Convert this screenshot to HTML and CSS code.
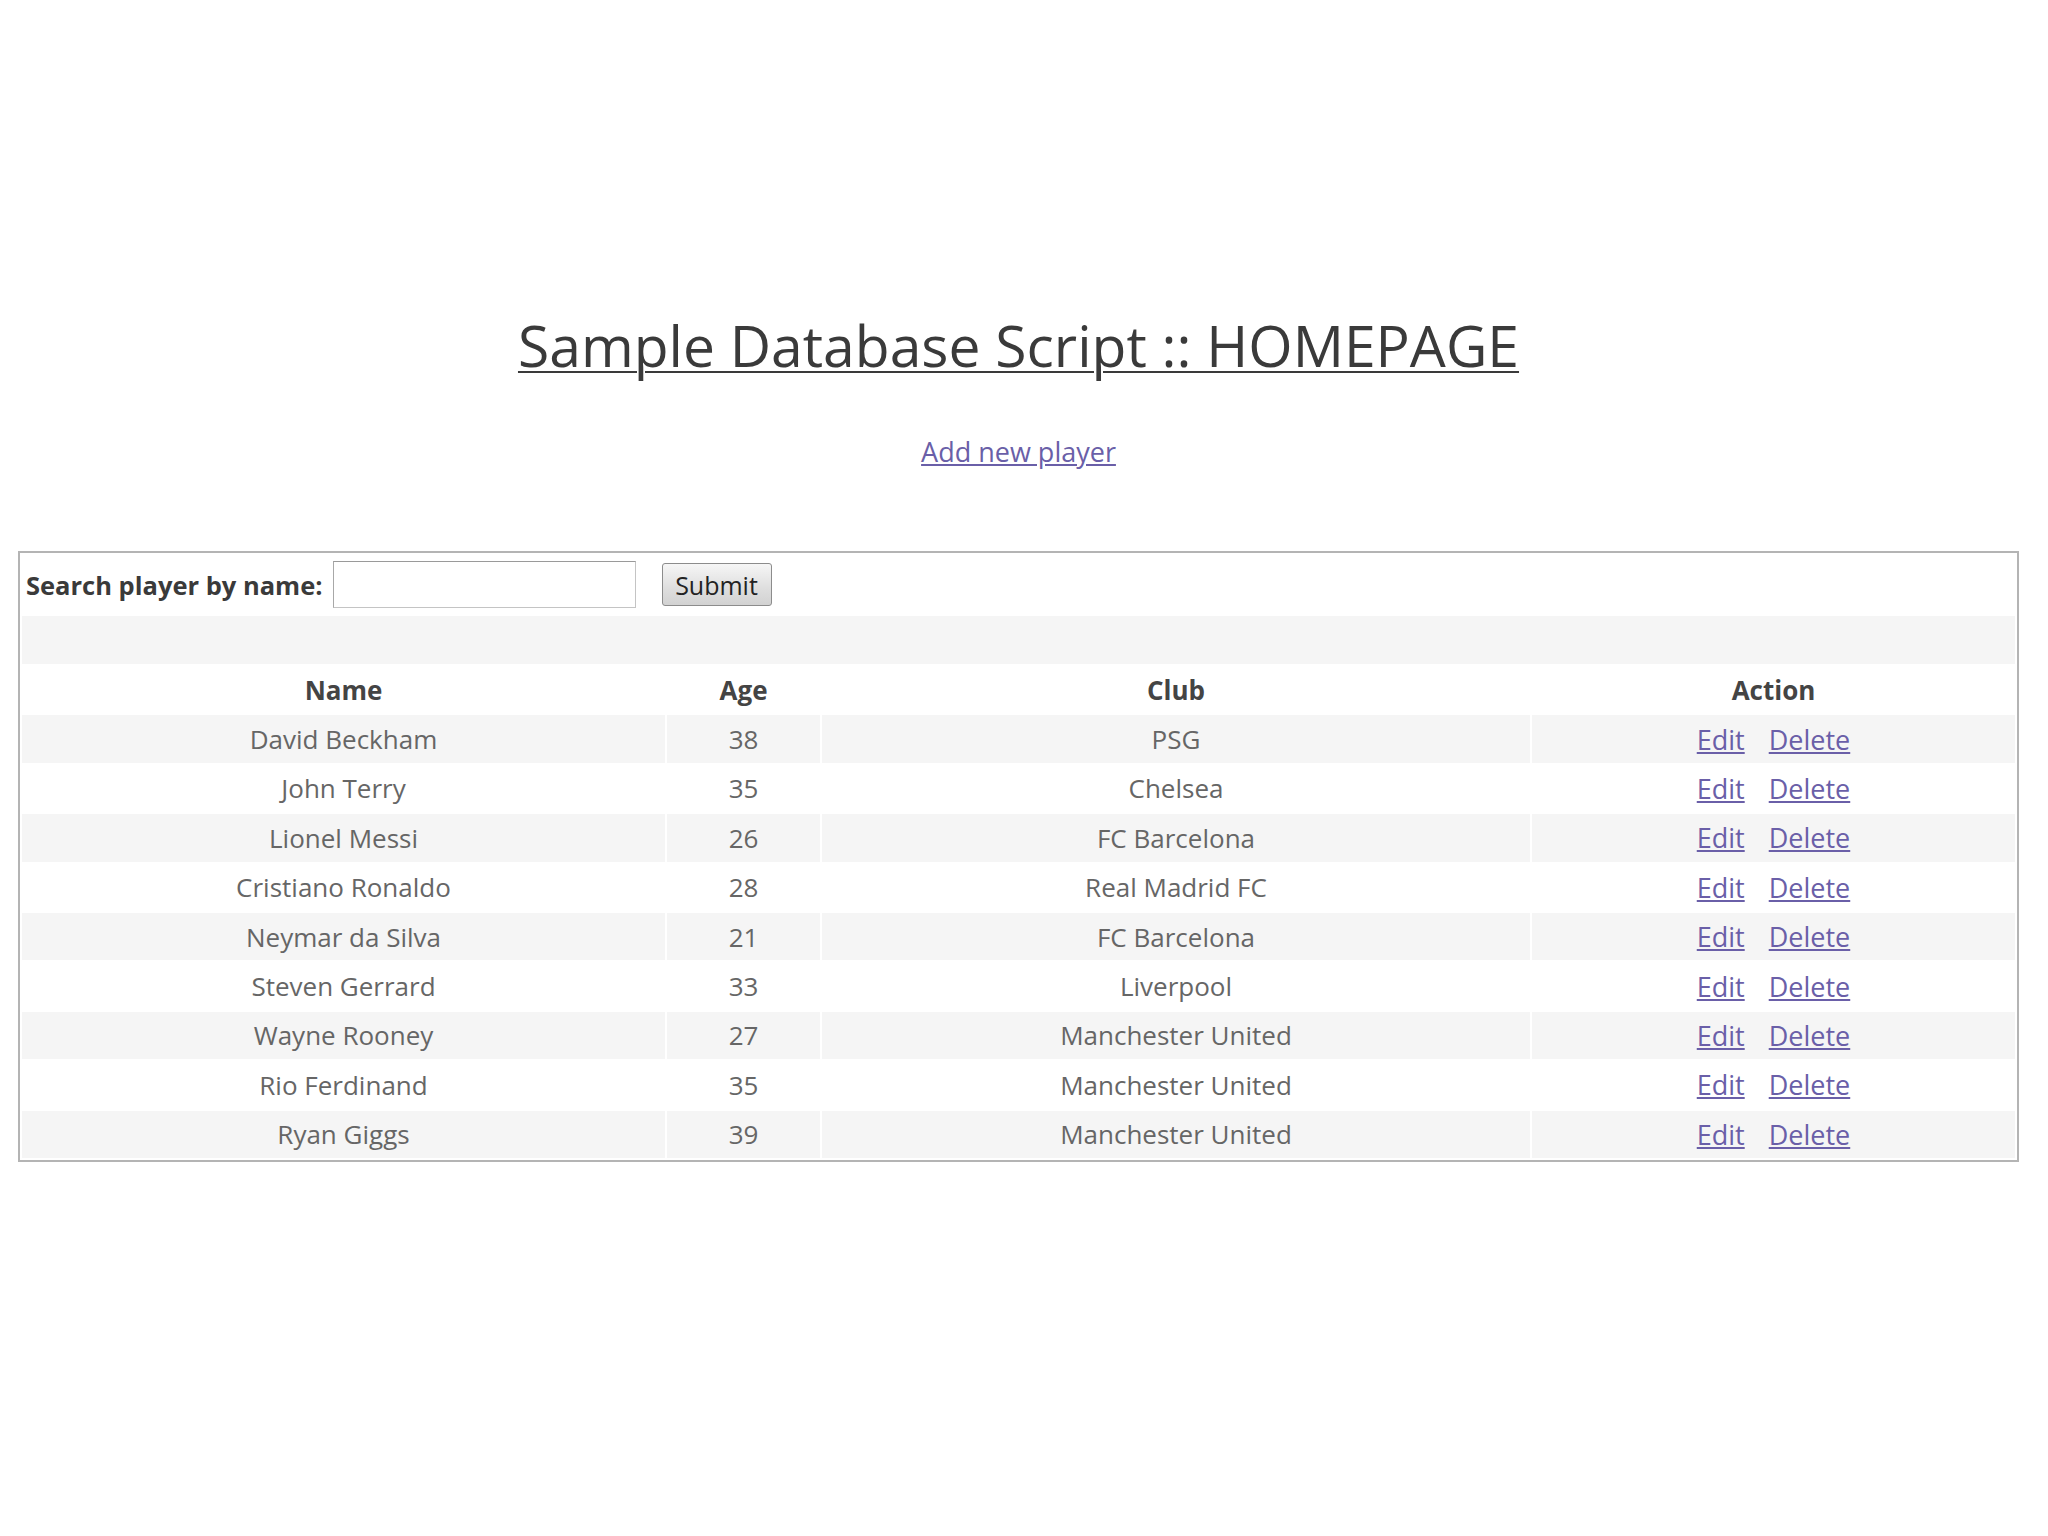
FILE: index.html
```html
<!DOCTYPE html>
<html lang="en">
<head>
<meta charset="utf-8">
<title>Sample Database Script :: HOMEPAGE</title>
<link rel="stylesheet" href="styles.css">
</head>
<body>
<div class="page">
  <h1 class="title">Sample Database Script :: HOMEPAGE</h1>
  <p class="add"><a href="#" class="add-link">Add new player</a></p>
  <div class="box">
    <table class="players">
      <colgroup>
        <col class="c-name">
        <col class="c-age">
        <col class="c-club">
        <col class="c-action">
      </colgroup>
      <tbody>
        <tr class="search-row">
          <td colspan="4" class="search-cell">
            <form class="search">
              <label class="search-label" for="q">Search player by name:</label>
              <input class="search-input" id="q" type="text">
              <button class="search-btn" type="button">Submit</button>
            </form>
          </td>
        </tr>
        <tr class="shade spacer"><td colspan="4"></td></tr>
        <tr class="head">
          <th>Name</th><th>Age</th><th>Club</th><th>Action</th>
        </tr>
        <tr class="shade"><td>David Beckham</td><td>38</td><td>PSG</td><td class="act"><a href="#">Edit</a><a href="#">Delete</a></td></tr>
        <tr><td>John Terry</td><td>35</td><td>Chelsea</td><td class="act"><a href="#">Edit</a><a href="#">Delete</a></td></tr>
        <tr class="shade"><td>Lionel Messi</td><td>26</td><td>FC Barcelona</td><td class="act"><a href="#">Edit</a><a href="#">Delete</a></td></tr>
        <tr><td>Cristiano Ronaldo</td><td>28</td><td>Real Madrid FC</td><td class="act"><a href="#">Edit</a><a href="#">Delete</a></td></tr>
        <tr class="shade"><td>Neymar da Silva</td><td>21</td><td>FC Barcelona</td><td class="act"><a href="#">Edit</a><a href="#">Delete</a></td></tr>
        <tr><td>Steven Gerrard</td><td>33</td><td>Liverpool</td><td class="act"><a href="#">Edit</a><a href="#">Delete</a></td></tr>
        <tr class="shade"><td>Wayne Rooney</td><td>27</td><td>Manchester United</td><td class="act"><a href="#">Edit</a><a href="#">Delete</a></td></tr>
        <tr><td>Rio Ferdinand</td><td>35</td><td>Manchester United</td><td class="act"><a href="#">Edit</a><a href="#">Delete</a></td></tr>
        <tr class="shade"><td>Ryan Giggs</td><td>39</td><td>Manchester United</td><td class="act"><a href="#">Edit</a><a href="#">Delete</a></td></tr>
      </tbody>
    </table>
  </div>
</div>
</body>
</html>
```
FILE: styles.css
```css
html, body {
  margin: 0;
  padding: 0;
  background: #ffffff;
}

body {
  font-family: "Open Sans", "DejaVu Sans", sans-serif;
  color: #666666;
}

.page {
  padding: 306px 29px 0 18px;
}

.title {
  margin: 0;
  font-size: 57px;
  line-height: 78px;
  font-weight: normal;
  color: #3a3a3a;
  text-align: center;
  text-decoration: underline;
  text-decoration-thickness: 2px;
  text-underline-offset: 4px;
}

.add {
  margin: 49px 0 0 0;
  text-align: center;
  font-size: 27px;
  line-height: 37px;
}

.add-link {
  color: #6a5fa8;
  text-decoration: underline;
}

.box {
  margin-top: 81px;
  border: 2px solid #b4b4b4;
  background: #ffffff;
}

.players {
  width: 100%;
  table-layout: fixed;
  border-collapse: separate;
  border-spacing: 2px;
  font-size: 26px;
}

.c-name { width: 643px; }
.c-age { width: 153px; }
.c-club { width: 708px; }
.c-action { width: 483px; }

.players td,
.players th {
  padding: 0;
  height: 47.4px;
  text-align: center;
  vertical-align: middle;
  white-space: nowrap;
}

.players th {
  font-weight: bold;
  color: #444444;
}

.shade td {
  background: #f5f5f5;
}

.spacer td {
  height: 48px;
}

.search-row td.search-cell {
  height: 59px;
  padding: 0 0 0 4px;
  text-align: left;
}

.search {
  display: flex;
  align-items: center;
  margin: 0;
}

.search-label {
  font-weight: bold;
  color: #3a3a3a;
  font-size: 25.5px;
}

.search-input {
  box-sizing: border-box;
  width: 303px;
  height: 47px;
  margin: 0 0 0 10px;
  border: 1px solid #c4c4c4;
  border-top-color: #9a9a9a;
  border-left-color: #a8a8a8;
  background: #ffffff;
  padding: 0 6px;
  font-family: inherit;
  font-size: 24px;
}

.search-btn {
  box-sizing: border-box;
  width: 110px;
  height: 43px;
  margin: 0 0 0 26px;
  padding: 0;
  border: 1px solid #8c8c8c;
  border-radius: 3px;
  background: linear-gradient(#f6f6f6, #dedede 60%, #d2d2d2);
  font-family: inherit;
  font-size: 25px;
  color: #222222;
}

.act a {
  color: #6a5fa8;
  text-decoration: underline;
  font-size: 27px;
}

.act a + a {
  margin-left: 24px;
}
```
